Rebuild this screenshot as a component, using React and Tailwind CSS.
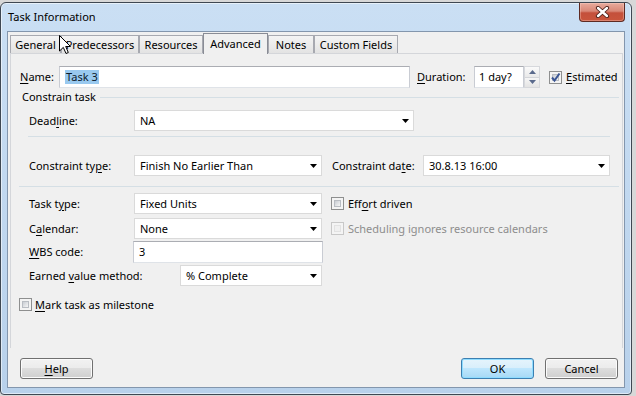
import React from "react";

const U = ({ children }) => (
  <span className="underline decoration-1 underline-offset-[2px]">{children}</span>
);

const Arrow = () => (
  <svg width="7" height="4" viewBox="0 0 7 4" className="shrink-0">
    <polygon points="0,0 7,0 3.5,4" fill="#000" />
  </svg>
);

function Combo({ w, children }) {
  return (
    <div
      className={`${w} h-[21px] shrink-0 bg-white border border-[#dadada] flex items-center pl-[5px] pr-[4px]`}
    >
      <span className="flex-1 leading-[14px] whitespace-nowrap">{children}</span>
      <Arrow />
    </div>
  );
}

function Check({ checked, disabled }) {
  return (
    <div
      className={`w-[13px] h-[13px] shrink-0 border ${
        disabled ? "border-[#c8c8c8] bg-[#f4f4f4]" : "border-[#8e8f8f] bg-[#f4f4f4]"
      } p-[2px] relative`}
    >
      <div
        className={`w-full h-full ${
          disabled
            ? "bg-[#f0f0f0] border border-[#e2e2e2]"
            : "bg-gradient-to-br from-[#c9cdd3] to-[#f6f6f6] border border-[#b9bdc3]"
        }`}
      />
      {checked && (
        <svg width="11" height="11" viewBox="0 0 11 11" className="absolute left-[0px] top-[0px]">
          <path d="M2 5.5 L4.5 8.5 L9.5 1.5" stroke="#3a5593" strokeWidth="2" fill="none" />
        </svg>
      )}
    </div>
  );
}

function Btn({ children, primary }) {
  return (
    <div
      className={`w-[73px] h-[21px] shrink-0 rounded-[3px] border flex items-center justify-center leading-[14px] ${
        primary
          ? "border-[#3c7fb1] bg-[linear-gradient(#e5f4fc,#d8eefb_50%,#bee6fd_50%,#a7d9f5)] shadow-[inset_0_0_0_1px_#8fdcff]"
          : "border-[#707070] bg-[linear-gradient(#f2f2f2,#ebebeb_50%,#dddddd_50%,#cfcfcf)] shadow-[inset_0_0_0_1px_#fbfbfb]"
      }`}
    >
      {children}
    </div>
  );
}

function Tab({ w, children, selected }) {
  if (selected) {
    return (
      <div
        className={`${w} h-[21px] shrink-0 relative z-10 border border-b-0 border-[#898c95] bg-[#f0f0f0] flex items-center justify-center leading-[14px] pb-[1px]`}
      >
        {children}
      </div>
    );
  }
  return (
    <div
      className={`${w} h-[18px] mt-[2px] shrink-0 border border-b-0 border-[#a7a9b0] bg-gradient-to-b from-[#f4f4f4] to-[#e3e3e3] flex items-center justify-center leading-[14px]`}
    >
      {children}
    </div>
  );
}

export default function App() {
  return (
    <div className="w-[636px] h-[396px] bg-[#d8d8d8] overflow-hidden font-['Noto_Sans',sans-serif] text-[11px] text-black relative">
      <div className="mt-[2px] w-[632px] h-[393px] border border-[#3f4853] rounded-t-[6px] rounded-b-[4px] bg-gradient-to-b from-[#cadff4] to-[#b8d1eb] shadow-[inset_0_0_0_1px_rgba(255,255,255,0.55)] flex flex-col">
        {/* Title bar */}
        <div className="h-[28px] flex items-start shrink-0">
          <div className="h-[28px] pl-[7px] flex items-center leading-[14px] text-[#000]">
            Task Information
          </div>
          <div className="ml-auto mr-[6px] w-[46px] h-[19px] rounded-b-[4px] border border-t-0 border-[#5e2a22] bg-[linear-gradient(#e8ab9d,#d98877_45%,#c4503b_55%,#c9553c)] shadow-[inset_0_0_0_1px_rgba(255,220,210,0.35)] flex items-center justify-center">
            <svg width="15" height="12" viewBox="0 0 15 12">
              <path d="M3 2 L12 10 M12 2 L3 10" stroke="#4a1f18" strokeWidth="4.2" strokeLinecap="round" />
              <path d="M3 2 L12 10 M12 2 L3 10" stroke="#ffffff" strokeWidth="2.4" strokeLinecap="round" />
            </svg>
          </div>
        </div>

        {/* Client area */}
        <div className="ml-[6px] w-[618px] h-[357px] border border-[#8396ad] bg-[#f0f0f0] flex flex-col">
          {/* Tabs */}
          <div className="mt-[1px] pl-[2px] h-[20px] flex items-start shrink-0">
            <Tab w="w-[51px]">General</Tab>
            <Tab w="w-[78px]">Predecessors</Tab>
            <Tab w="w-[64px]">Resources</Tab>
            <Tab w="w-[65px]" selected>Advanced</Tab>
            <Tab w="w-[46px]">Notes</Tab>
            <Tab w="w-[84px]">Custom Fields</Tab>
          </div>

          {/* Panel */}
          <div className="ml-[2px] w-[613px] h-[295px] border border-b-0 border-[#d4d6da] flex flex-col shrink-0">
            {/* Name row */}
            <div className="mt-[12px] pl-[9px] h-[22px] flex items-center">
              <div className="w-[39px] shrink-0 leading-[14px]">
                <U>N</U>ame:
              </div>
              <div className="w-[351px] h-[22px] shrink-0 bg-white border border-[#abadb3] border-x-[#c9ccd3] border-b-[#dfe3e8] flex items-center pl-[5px]">
                <span className="bg-[#99c9ef] leading-[14px] px-[1px] text-[#0b1a2c]">Task 3</span>
              </div>
              <div className="ml-[7px] w-[57px] shrink-0 leading-[14px]">
                <U>D</U>uration:
              </div>
              <div className="w-[50px] h-[22px] shrink-0 bg-white border border-[#abadb3] border-x-[#c9ccd3] border-b-[#dfe3e8] flex items-center pl-[4px] leading-[14px]">
                1 day?
              </div>
              <div className="w-[16px] h-[22px] shrink-0 flex flex-col border border-[#d6d8dc] bg-[#f4f4f4]">
                <div className="flex-1 flex items-center justify-center bg-gradient-to-b from-[#fafafa] to-[#e9e9e9] border-b border-[#d3d5d9]">
                  <svg width="7" height="4" viewBox="0 0 7 4">
                    <polygon points="0,4 7,4 3.5,0" fill="#5a6a8c" />
                  </svg>
                </div>
                <div className="flex-1 flex items-center justify-center bg-gradient-to-b from-[#f6f6f6] to-[#e4e4e4]">
                  <svg width="7" height="4" viewBox="0 0 7 4">
                    <polygon points="0,0 7,0 3.5,4" fill="#5a6a8c" />
                  </svg>
                </div>
              </div>
              <div className="ml-[9px]">
                <Check checked />
              </div>
              <div className="ml-[4px] leading-[14px]">
                <U>E</U>stimated
              </div>
            </div>

            {/* Constrain task header */}
            <div className="mt-[1px] h-[16px] pl-[11px] flex items-center">
              <span className="leading-[14px] whitespace-nowrap">Constrain task</span>
              <div className="flex-1 h-px ml-[4px] mr-[3px] bg-[#d5dfe5]" />
            </div>

            {/* Deadline */}
            <div className="mt-[5px] h-[21px] pl-[18px] flex items-center">
              <div className="w-[105px] shrink-0 leading-[14px]">
                Dead<U>l</U>ine:
              </div>
              <Combo w="w-[280px]">NA</Combo>
            </div>

            <div className="mt-[5px] ml-[17px] w-[582px] h-px bg-[#d5dfe5] shrink-0" />

            {/* Constraint */}
            <div className="mt-[18px] h-[21px] pl-[18px] flex items-center">
              <div className="w-[105px] shrink-0 leading-[14px]">
                Constraint ty<U>p</U>e:
              </div>
              <Combo w="w-[188px]">Finish No Earlier Than</Combo>
              <div className="ml-[10px] w-[91px] shrink-0 leading-[14px]">
                Constraint da<U>t</U>e:
              </div>
              <Combo w="w-[187px]">30.8.13 16:00</Combo>
            </div>

            <div className="mt-[10px] ml-[8px] w-[600px] h-px bg-[#d5dfe5] shrink-0" />

            {/* Task type */}
            <div className="mt-[6px] h-[21px] pl-[18px] flex items-center">
              <div className="w-[105px] shrink-0 leading-[14px]">
                Task t<U>y</U>pe:
              </div>
              <Combo w="w-[188px]">Fixed Units</Combo>
              <div className="ml-[9px]">
                <Check />
              </div>
              <div className="ml-[4px] leading-[14px]">
                Eff<U>o</U>rt driven
              </div>
            </div>

            {/* Calendar */}
            <div className="mt-[4px] h-[21px] pl-[18px] flex items-center">
              <div className="w-[105px] shrink-0 leading-[14px]">
                C<U>a</U>lendar:
              </div>
              <Combo w="w-[188px]">None</Combo>
              <div className="ml-[9px]">
                <Check disabled />
              </div>
              <div className="ml-[4px] leading-[14px] text-[#8d8d8d]">
                Schedulin<U>g</U> ignores resource calendars
              </div>
            </div>

            {/* WBS */}
            <div className="mt-[2px] h-[22px] pl-[18px] flex items-center">
              <div className="w-[104px] shrink-0 leading-[14px]">
                <U>W</U>BS code:
              </div>
              <div className="w-[190px] h-[22px] shrink-0 bg-white border border-[#abadb3] border-x-[#c9ccd3] border-b-[#dfe3e8] flex items-center pl-[5px] leading-[14px]">
                3
              </div>
            </div>

            {/* Earned value */}
            <div className="mt-[2px] h-[21px] pl-[18px] flex items-center">
              <div className="w-[151px] shrink-0 leading-[14px]">
                Earned <U>v</U>alue method:
              </div>
              <Combo w="w-[142px]">% Complete</Combo>
            </div>

            {/* Milestone */}
            <div className="mt-[12px] h-[13px] pl-[8px] flex items-center">
              <Check />
              <div className="ml-[3px] leading-[14px]">
                <U>M</U>ark task as milestone
              </div>
            </div>
          </div>

          {/* Buttons */}
          <div className="mt-[10px] pl-[12px] pr-[6px] flex items-center">
            <Btn>
              <span>
                <U>H</U>elp
              </span>
            </Btn>
            <div className="ml-auto flex">
              <Btn primary>OK</Btn>
              <div className="ml-[11px]">
                <Btn>Cancel</Btn>
              </div>
            </div>
          </div>
        </div>
      </div>

      {/* Mouse cursor */}
      <svg
        width="13"
        height="20"
        viewBox="0 0 13 20"
        className="absolute left-[59px] top-[35px] z-20"
      >
        <polygon
          points="0.5,0.5 0.5,16 4.3,12.4 7,18.5 9.3,17.5 6.7,11.5 11.5,11.5"
          fill="#ffffff"
          stroke="#000000"
          strokeWidth="1"
          strokeLinejoin="miter"
        />
      </svg>
    </div>
  );
}
